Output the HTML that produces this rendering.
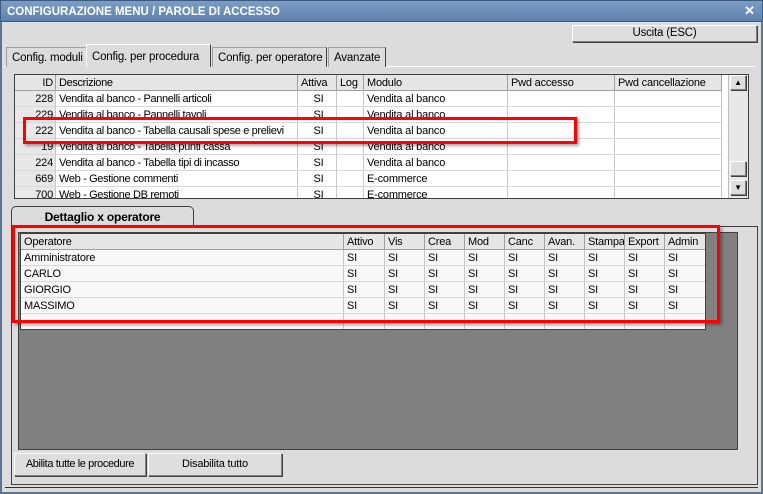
<!DOCTYPE html>
<html><head><meta charset="utf-8"><style>
*{box-sizing:border-box;margin:0;padding:0}
body{width:763px;height:494px;overflow:hidden;background:#dcdcdc;font-family:"Liberation Sans",sans-serif;font-size:11px;letter-spacing:-0.2px;color:#000;position:relative}
.a{position:absolute;white-space:nowrap}
.title{left:0;top:0;width:763px;height:22px;background:linear-gradient(#7b9cc4,#5f82ad);color:#fff;font-weight:bold;font-size:11.5px;letter-spacing:0;padding:5px 6px;border:1px solid #3c5a80}
.btn{background:#dedede;border:1px solid;border-color:#fff #808080 #808080 #fff;text-align:center;line-height:15px;box-shadow:1px 1px 0 #404040}
.tab{top:47px;height:20px;border:1px solid #a0a0a0;border-bottom:none;padding:4px 0 0 5px;background:#dcdcdc;font-size:11.5px}
.cell{position:absolute;height:16px;line-height:16px;padding-left:3px;white-space:nowrap;overflow:hidden;border-right:1px solid #c8c8c8;border-bottom:1px solid #d8d8d8}
.red{border:3px solid #f00;box-shadow:2px 2px 3px rgba(0,0,0,.35)}
</style></head><body>
<div class="a title">CONFIGURAZIONE MENU / PAROLE DI ACCESSO</div>
<div class="a" style="left:743px;top:4px;width:13px;height:13px;color:#fff;font-weight:bold;font-size:13px;line-height:13px;text-align:center">✕</div>
<div class="a" style="left:0;top:22px;width:763px;height:472px;border:2px solid #5a7696;border-top:none"></div>
<div class="a btn" style="left:572px;top:25px;width:185px;height:17px;font-size:11.5px">Uscita (ESC)</div>

<div class="a" style="left:4px;top:66px;width:752px;height:1px;background:#fff"></div>
<div class="a tab" style="left:6px;width:81px">Config. moduli</div>
<div class="a tab" style="left:86px;top:44px;height:23px;width:125px;border-color:#fff #404040 #fff #fff;padding-top:6px">Config. per procedura</div>
<div class="a tab" style="left:212px;width:115px;border-right-color:#404040">Config. per operatore</div>
<div class="a tab" style="left:328px;width:58px;border-right-color:#404040">Avanzate</div>

<div class="a" style="left:14px;top:74px;width:735px;height:125px;border:1px solid #404040;background:#fff;overflow:hidden">
<div id="g1"></div></div>
<div class="a" style="left:728px;top:75px;width:20px;height:123px;background:#e8e8e8;border-left:1px solid #c0c0c0"></div>
<div class="a btn" style="left:730px;top:75px;width:16px;height:15px;font-size:8px;line-height:13px">▲</div>
<div class="a btn" style="left:730px;top:161px;width:16px;height:15px"></div>
<div class="a btn" style="left:730px;top:180px;width:16px;height:15px;font-size:8px;line-height:13px">▼</div>

<div class="a" style="left:11px;top:206px;width:183px;height:21px;border:1px solid #404040;border-bottom:none;border-radius:5px 5px 0 0;background:#dcdcdc;font-weight:bold;font-size:12px;text-align:center;line-height:20px">Dettaglio x operatore</div>
<div class="a" style="left:11px;top:226px;width:747px;height:259px;border:1px solid #404040;border-top-color:#404040"></div>
<div class="a" style="left:18px;top:232px;width:720px;height:218px;border:1px solid #404040;background:#808080"></div>
<div class="a" style="left:20px;top:233px;width:686px;height:97px;background:#f8f8f8;border:1px solid #404040;overflow:hidden"><div id="g2"></div></div>
<div class="a btn" style="left:14px;top:453px;width:132px;height:23px;line-height:21px;letter-spacing:-0.4px">Abilita tutte le procedure</div>
<div class="a btn" style="left:148px;top:453px;width:134px;height:23px;line-height:21px">Disabilita tutto</div>
<div class="a" style="left:5px;top:487px;width:753px;height:1px;background:#303030"></div>

<div class="a red" style="left:23px;top:117px;width:554px;height:27px"></div>
<div class="a red" style="left:12px;top:225px;width:708px;height:98px"></div>

<script>
function grid(id,cols,rows,hdrAlign,rowStart,hl){
 var g=document.getElementById(id),h='';
 var allR=[cols.map(c=>c[1])].concat(rows);
 allR.forEach(function(r,ri){
  var x=0;
  cols.forEach(function(c,ci){
   var bg=ri==0?'#e6e6e6':(hl==ri?'#b0e4e8':(ci==0&&id=='g1'?'#e8e8e8':'transparent'));
   var al=(c[2]&&ri>0)?c[2]:'left';
   if(ci==0&&id=='g1')al='right';
   h+='<div class="cell" style="left:'+x+'px;top:'+(ri*16)+'px;width:'+c[0]+'px;background:'+bg+';text-align:'+al+';padding-right:'+(al=='right'?'2px':'0')+(ci==1&&id=='g1'?';letter-spacing:-0.35px':'')+(ri==0?';border-right-color:#a0a0a0;border-bottom-color:#a0a0a0':'')+'">'+(r[ci]||'')+'</div>';
   x+=c[0];
  });
 });
 g.innerHTML=h;
}
grid('g1',[[41,'ID'],[242,'Descrizione'],[39,'Attiva','center'],[27,'Log'],[144,'Modulo'],[107,'Pwd accesso'],[107,'Pwd cancellazione']],
[['228','Vendita al banco - Pannelli articoli','SI','','Vendita al banco'],
['229','Vendita al banco - Pannelli tavoli','SI','','Vendita al banco'],
['222','Vendita al banco - Tabella causali spese e prelievi','SI','','Vendita al banco'],
['19','Vendita al banco - Tabella punti cassa','SI','','Vendita al banco'],
['224','Vendita al banco - Tabella tipi di incasso','SI','','Vendita al banco'],
['669','Web - Gestione commenti','SI','','E-commerce'],
['700','Web - Gestione DB remoti','SI','','E-commerce']],0,3);
var s=['SI','SI','SI','SI','SI','SI','SI','SI','SI'];
grid('g2',[[323,'Operatore'],[41,'Attivo'],[40,'Vis'],[40,'Crea'],[40,'Mod'],[40,'Canc'],[40,'Avan.'],[40,'Stampa'],[40,'Export'],[41,'Admin']],
[['Amministratore'].concat(s),['CARLO'].concat(s),['GIORGIO'].concat(s),['MASSIMO'].concat(s),['']],0,-1);
</script>
</body></html>
